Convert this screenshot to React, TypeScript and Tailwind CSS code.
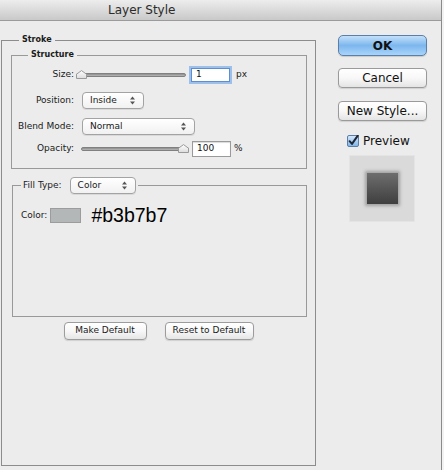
import type { ReactNode } from 'react'

const UI = { fontFamily: '"DejaVu Sans", "Liberation Sans", sans-serif' }

const Arrows = () => (
  <svg width="5" height="9" viewBox="0 0 5 9" className="shrink-0">
    <path d="M0 3.5 L2.5 0.5 L5 3.5 Z" fill="#555" />
    <path d="M0 5.5 L2.5 8.5 L5 5.5 Z" fill="#555" />
  </svg>
)

const Select = ({ value, width }: { value: string; width: number }) => (
  <div
    className="flex items-center justify-between h-[17px] pl-[7px] pr-[8px] rounded-[4px] border border-[#a3a3a3] bg-gradient-to-b from-white to-[#f1f1f1] shadow-[0_1px_0_rgba(0,0,0,0.08)] text-[9px] text-[#1a1a1a]"
    style={{ width }}
  >
    <span>{value}</span>
    <Arrows />
  </div>
)

const Thumb = () => (
  <svg width="11" height="9" viewBox="0 0 11 9">
    <defs>
      <linearGradient id="thumbg" x1="0" y1="0" x2="0" y2="1">
        <stop offset="0" stopColor="#ffffff" />
        <stop offset="1" stopColor="#dcdcdc" />
      </linearGradient>
    </defs>
    <path d="M0.5 8.5 V4.2 L5.5 0.6 L10.5 4.2 V8.5 Z" fill="url(#thumbg)" stroke="#9a9a9a" strokeWidth="1" />
  </svg>
)

const Slider = ({ width, at }: { width: number; at: 'left' | 'right' }) => (
  <div className="relative h-[10px]" style={{ width }}>
    <div className="absolute left-0 right-0 top-[3px] h-[4px] rounded-full border border-[#808080] bg-gradient-to-b from-[#8c8c8c] to-[#b8b8b8]" />
    <div className={`absolute top-[0px] ${at === 'left' ? 'left-0' : 'right-0'}`}>
      <Thumb />
    </div>
  </div>
)

const Field = ({ value, focus, height }: { value: string; focus?: boolean; height: number }) => (
  <div
    className={`w-[39px] flex items-center pl-[4px] bg-white border text-[9px] text-[#111] ${
      focus ? 'border-[#5d8fcf] shadow-[0_0_0_2px_#9cc0ea]' : 'border-[#9a9a9a] shadow-[inset_0_1px_1px_rgba(0,0,0,0.15)]'
    }`}
    style={{ height }}
  >
    {value}
  </div>
)

const Row = ({ label, children, mt }: { label: string; children: ReactNode; mt: string }) => (
  <div className={`flex items-center ${mt}`}>
    <div className="w-[62px] text-right text-[9px] text-[#1a1a1a] shrink-0">{label}</div>
    {children}
  </div>
)

const PushButton = ({ children, w }: { children: ReactNode; w: string }) => (
  <div
    className={`${w} h-[18px] flex items-center justify-center rounded-[4px] border border-[#9c9c9c] bg-gradient-to-b from-white via-[#f7f7f7] to-[#e6e6e6] shadow-[0_1px_1px_rgba(0,0,0,0.12)] text-[9px] text-[#1a1a1a]`}
  >
    {children}
  </div>
)

const SideButton = ({ children }: { children: ReactNode }) => (
  <div className="w-[89px] h-[20px] flex items-center justify-center rounded-[4px] border border-[#9a9a9a] bg-gradient-to-b from-white via-[#f8f8f8] to-[#e4e4e4] shadow-[0_1px_1px_rgba(0,0,0,0.12)] text-[12px] text-[#111]">
    {children}
  </div>
)

export default function App() {
  return (
    <div className="w-[444px] h-[470px] bg-[#f2f2f2] overflow-hidden" style={UI}>
      <div className="w-[442px] h-[470px] bg-[#ececec] border-r border-[#8a8a8a]">
        {/* title bar */}
        <div className="h-[21px] bg-gradient-to-b from-[#ededed] to-[#c9c9c9] border-b border-[#9b9b9b] flex items-center pl-[108px] text-[12px] text-[#2b2b2b]">
          Layer Style
        </div>

        <div className="flex">
          {/* left: stroke panel */}
          <fieldset className="ml-[1px] mt-[14px] w-[315px] h-[431px] border border-[#8c8c8c] px-[0px]">
            <legend className="ml-[17px] px-[3px] text-[8px] font-bold leading-[10px] text-[#1a1a1a]">Stroke</legend>

            <fieldset className="ml-[9px] mt-[5px] w-[296px] h-[119px] border border-[#999]">
              <legend className="ml-[16px] px-[3px] text-[8px] font-bold leading-[10px] text-[#1a1a1a]">Structure</legend>

              <Row label="Size:" mt="mt-[8px]">
                <div className="ml-[2px]">
                  <Slider width={110} at="left" />
                </div>
                <div className="ml-[5px]">
                  <Field value="1" focus height={14} />
                </div>
                <span className="ml-[6px] text-[9px] text-[#1a1a1a]">px</span>
              </Row>

              <Row label="Position:" mt="mt-[10px]">
                <div className="ml-[8px]">
                  <Select value="Inside" width={62} />
                </div>
              </Row>

              <Row label="Blend Mode:" mt="mt-[9px]">
                <div className="ml-[8px]">
                  <Select value="Normal" width={113} />
                </div>
              </Row>

              <Row label="Opacity:" mt="mt-[6px]">
                <div className="ml-[7px]">
                  <Slider width={108} at="right" />
                </div>
                <div className="ml-[3px]">
                  <Field value="100" height={16} />
                </div>
                <span className="ml-[3px] text-[9px] text-[#1a1a1a]">%</span>
              </Row>
            </fieldset>

            <fieldset className="ml-[10px] mt-[8px] w-[295px] h-[140px] border border-[#999]">
              <legend className="ml-[8px] px-[2px]">
                <div className="flex items-center">
                  <span className="text-[9px] text-[#1a1a1a]">Fill Type:</span>
                  <div className="ml-[8px]">
                    <Select value="Color" width={66} />
                  </div>
                </div>
              </legend>

              <div className="flex items-center mt-[12px] ml-[8px]">
                <span className="text-[9px] text-[#1a1a1a]">Color:</span>
                <div className="ml-[3px] w-[31px] h-[15px] bg-[#b3b7b7] border border-[#9c9c9c]" />
                <span
                  className="ml-[10px] text-[19.5px] leading-none text-black"
                  style={{ fontFamily: '"Liberation Sans", Arial, sans-serif' }}
                >
                  #b3b7b7
                </span>
              </div>
            </fieldset>

            <div className="flex justify-center gap-[18px] mt-[5px]">
              <PushButton w="w-[83px]">Make Default</PushButton>
              <PushButton w="w-[89px]">Reset to Default</PushButton>
            </div>
          </fieldset>

          {/* right: buttons & preview */}
          <div className="ml-[22px] w-[89px] flex flex-col">
            <div className="mt-[14px] w-[89px] h-[21px] flex items-center justify-center rounded-[5px] border border-[#5b7fa6] bg-gradient-to-b from-[#c4e0fa] via-[#7db7ee] to-[#a9d4fa] shadow-[0_1px_1px_rgba(0,0,0,0.15)] text-[12px] font-bold text-[#111]">
              OK
            </div>
            <div className="mt-[12px]">
              <SideButton>Cancel</SideButton>
            </div>
            <div className="mt-[13px]">
              <SideButton>New Style...</SideButton>
            </div>
            <div className="mt-[11px] ml-[9px] flex items-center">
              <svg width="12" height="12" viewBox="0 0 12 12" className="shrink-0">
                <defs>
                  <linearGradient id="chk" x1="0" y1="0" x2="0" y2="1">
                    <stop offset="0" stopColor="#d8eafb" />
                    <stop offset="1" stopColor="#7fb3e6" />
                  </linearGradient>
                </defs>
                <rect x="0.5" y="0.5" width="11" height="11" rx="1.5" fill="url(#chk)" stroke="#5a7ea8" />
                <path d="M2.6 6.2 L5 8.9 L10.8 0.6" fill="none" stroke="#1c2738" strokeWidth="2" strokeLinecap="round" strokeLinejoin="round" />
              </svg>
              <span className="ml-[4px] text-[12px] text-[#111]">Preview</span>
            </div>
            <div className="mt-[5px] ml-[11px] w-[66px] h-[67px] bg-[#dadada] border border-[#e4e4e4] flex items-center justify-center">
              <div className="w-[31px] h-[31px] bg-gradient-to-b from-[#6e6e6e] to-[#3f3f3f] shadow-[0_0_3px_2px_rgba(90,90,90,0.45)]" />
            </div>
          </div>
        </div>
      </div>
    </div>
  )
}
